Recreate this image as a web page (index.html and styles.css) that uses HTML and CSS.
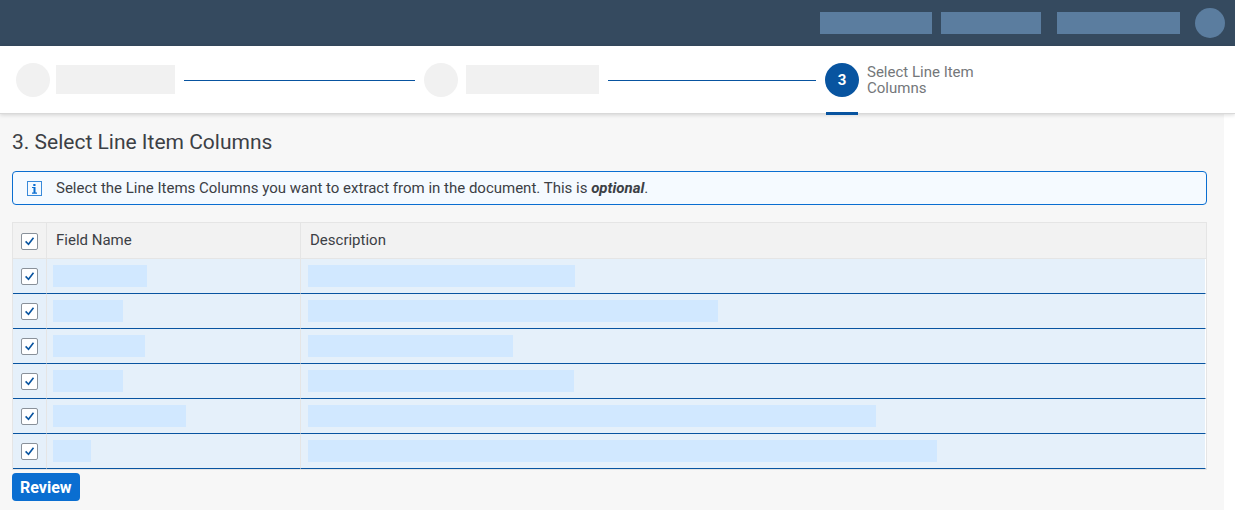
FILE: index.html
```html
<!DOCTYPE html>
<html lang="en">
<head>
<meta charset="utf-8">
<title>Select Line Item Columns</title>
<link rel="stylesheet" href="styles.css">
</head>
<body>
<header class="shell">
  <span class="shell-item shell-item-a"></span>
  <span class="shell-item shell-item-b"></span>
  <span class="shell-item shell-item-c"></span>
  <span class="avatar"></span>
</header>
<nav class="wizard" aria-label="Steps">
  <div class="step">
    <span class="step-dot"></span>
    <span class="step-bar step-bar-first"></span>
    <span class="step-line"></span>
  </div>
  <div class="step">
    <span class="step-dot"></span>
    <span class="step-bar step-bar-second"></span>
    <span class="step-line"></span>
  </div>
  <div class="step step-current" aria-current="step">
    <span class="step-dot">3</span>
    <span class="step-label">Select Line Item Columns</span>
  </div>
</nav>
<main class="content">
  <h1 class="title">3. Select Line Item Columns</h1>
  <div class="message">
    <svg class="message-icon" viewBox="0 0 15 15" width="15" height="15" aria-hidden="true">
      <rect x=".5" y=".5" width="14" height="14" fill="none" stroke="#0a6ed1" stroke-opacity=".8"/>
      <path d="M6.300 3h2.200v2H6.300zM5 6h3.500v6h-2V7H5zM5 11.500h5v1.200H5z" fill="#0a6ed1"/>
    </svg>
    <p class="message-text">Select the Line Items Columns you want to extract from in the document. This is <strong><em>optional</em></strong>.</p>
  </div>
  <div class="table-frame">
    <table class="table">
      <thead>
        <tr>
          <th class="pick"><input class="check" type="checkbox" aria-label="Select all" checked></th>
          <th class="name" scope="col">Field Name</th>
          <th class="desc" scope="col">Description</th>
        </tr>
      </thead>
      <tbody>
        <tr><td class="pick"><input class="check" type="checkbox" aria-label="Row 1" checked></td><td class="name"><div class="bar" style="width:94px"></div></td><td class="desc"><div class="bar" style="width:267px"></div></td></tr>
        <tr><td class="pick"><input class="check" type="checkbox" aria-label="Row 2" checked></td><td class="name"><div class="bar" style="width:70px"></div></td><td class="desc"><div class="bar" style="width:410px"></div></td></tr>
        <tr><td class="pick"><input class="check" type="checkbox" aria-label="Row 3" checked></td><td class="name"><div class="bar" style="width:92px"></div></td><td class="desc"><div class="bar" style="width:205px"></div></td></tr>
        <tr><td class="pick"><input class="check" type="checkbox" aria-label="Row 4" checked></td><td class="name"><div class="bar" style="width:70px"></div></td><td class="desc"><div class="bar" style="width:266px"></div></td></tr>
        <tr><td class="pick"><input class="check" type="checkbox" aria-label="Row 5" checked></td><td class="name"><div class="bar" style="width:133px"></div></td><td class="desc"><div class="bar" style="width:568px"></div></td></tr>
        <tr><td class="pick"><input class="check" type="checkbox" aria-label="Row 6" checked></td><td class="name"><div class="bar" style="width:38px"></div></td><td class="desc"><div class="bar" style="width:629px"></div></td></tr>
      </tbody>
    </table>
  </div>
  <button class="review" type="button">Review</button>
</main>
</body>
</html>
```
FILE: styles.css
```css
* {
  box-sizing: border-box;
}

body {
  margin: 0;
  background: #fff;
  color: #3c4045;
  font-family: Roboto, "Noto Sans", sans-serif;
  font-size: 15px;
}

.shell {
  display: flex;
  justify-content: flex-end;
  align-items: center;
  height: 46px;
  padding-right: 10px;
  background: #354a5f;
}

.shell-item {
  height: 22px;
  background: #5b7d9f;
}

.shell-item-a {
  width: 112px;
  margin-right: 9px;
}

.shell-item-b {
  width: 100px;
  margin-right: 16px;
}

.shell-item-c {
  width: 123px;
  margin-right: 15px;
}

.avatar {
  width: 30px;
  height: 30px;
  border-radius: 50%;
  background: #5b7d9f;
}

.wizard {
  position: relative;
  display: grid;
  grid-template-columns: 408fr 401fr 410fr;
  height: 68px;
  padding-left: 16px;
  background: #fff;
  border-bottom: 1px solid #d9d9d9;
  box-shadow: 0 1px 4px rgba(0, 0, 0, 0.15);
}

.step {
  display: flex;
  align-items: center;
}

.step-dot {
  flex: none;
  width: 34px;
  height: 34px;
  border-radius: 50%;
  background: #f1f1f1;
}

.step-bar {
  flex: none;
  height: 29px;
  background: #f1f1f1;
}

.step-bar-first {
  width: 119px;
  margin-left: 6px;
}

.step-bar-second {
  width: 133px;
  margin-left: 8px;
}

.step-line {
  flex: 1;
  height: 1px;
  margin: 1px 9px 0;
  background: #0854a0;
}

.step-current {
  position: relative;
  gap: 8px;
}

.step-current .step-dot {
  background: #0854a0;
  color: #fff;
  font-weight: 700;
  line-height: 34px;
  text-align: center;
}

.step-current::after {
  content: "";
  position: absolute;
  bottom: -2px;
  left: 1px;
  width: 32px;
  height: 3px;
  background: #0854a0;
}

.step-label {
  width: 120px;
  color: #74777a;
  line-height: 16px;
}

.content {
  margin-right: 11px;
  padding: 16px 17px 9px 12px;
  background: #f7f7f7;
}

.title {
  margin: 0 0 17px;
  font-size: 21px;
  font-weight: 400;
  line-height: 24px;
}

.message {
  display: flex;
  align-items: center;
  gap: 14px;
  min-height: 34px;
  margin-bottom: 17px;
  padding: 0 14px;
  background: #f5faff;
  border: 1px solid #0a6ed1;
  border-radius: 4px;
}

.message-icon {
  flex: none;
}

.message-text {
  margin: 0;
}

.table-frame {
  margin-bottom: 3px;
  background: #fff;
  border: 1px solid #e5e5e5;
}

.table {
  width: 100%;
  border-collapse: separate;
  border-spacing: 0;
  table-layout: fixed;
}

.table th {
  height: 36px;
  padding: 0 9px 2px;
  background: #f2f2f2;
  border-right: 1px solid #e5e5e5;
  border-bottom: 1px solid #e5e5e5;
  font-weight: 400;
  text-align: left;
}

.table td {
  height: 35px;
  padding: 0 6px;
  background: #e5f0fa;
  border-right: 1px solid #e5e5e5;
  border-bottom: 1px solid #0854a0;
}

.table th.desc {
  border-right: 0;
}

.table td.desc {
  padding-left: 7px;
  border-right-color: #fff;
}

.table .pick {
  width: 34px;
  padding: 0 0 0 8px;
}

.table th.pick {
  padding-top: 1px;
}

.table .name {
  width: 254px;
}

.check {
  display: block;
  width: 17px;
  height: 17px;
  margin: 0;
  appearance: none;
  background: #fff;
  border: 1px solid #89919a;
  border-radius: 2px;
}

.check:checked {
  background: #fff url("data:image/svg+xml,%3Csvg xmlns='http://www.w3.org/2000/svg' viewBox='0 0 15 15'%3E%3Cpath d='M3.600 7.400 6.500 10.300 11.500 3.700' fill='none' stroke='%230854a0' stroke-width='1.600'/%3E%3C/svg%3E") center / 15px 15px no-repeat;
}

.bar {
  height: 22px;
  background: #d1e8ff;
}

.review {
  display: block;
  height: 28px;
  padding: 0 8px;
  background: #0a6ed1;
  border: 0;
  border-radius: 4px;
  color: #fff;
  font: 700 16px Roboto, "Noto Sans", sans-serif;
}
```
